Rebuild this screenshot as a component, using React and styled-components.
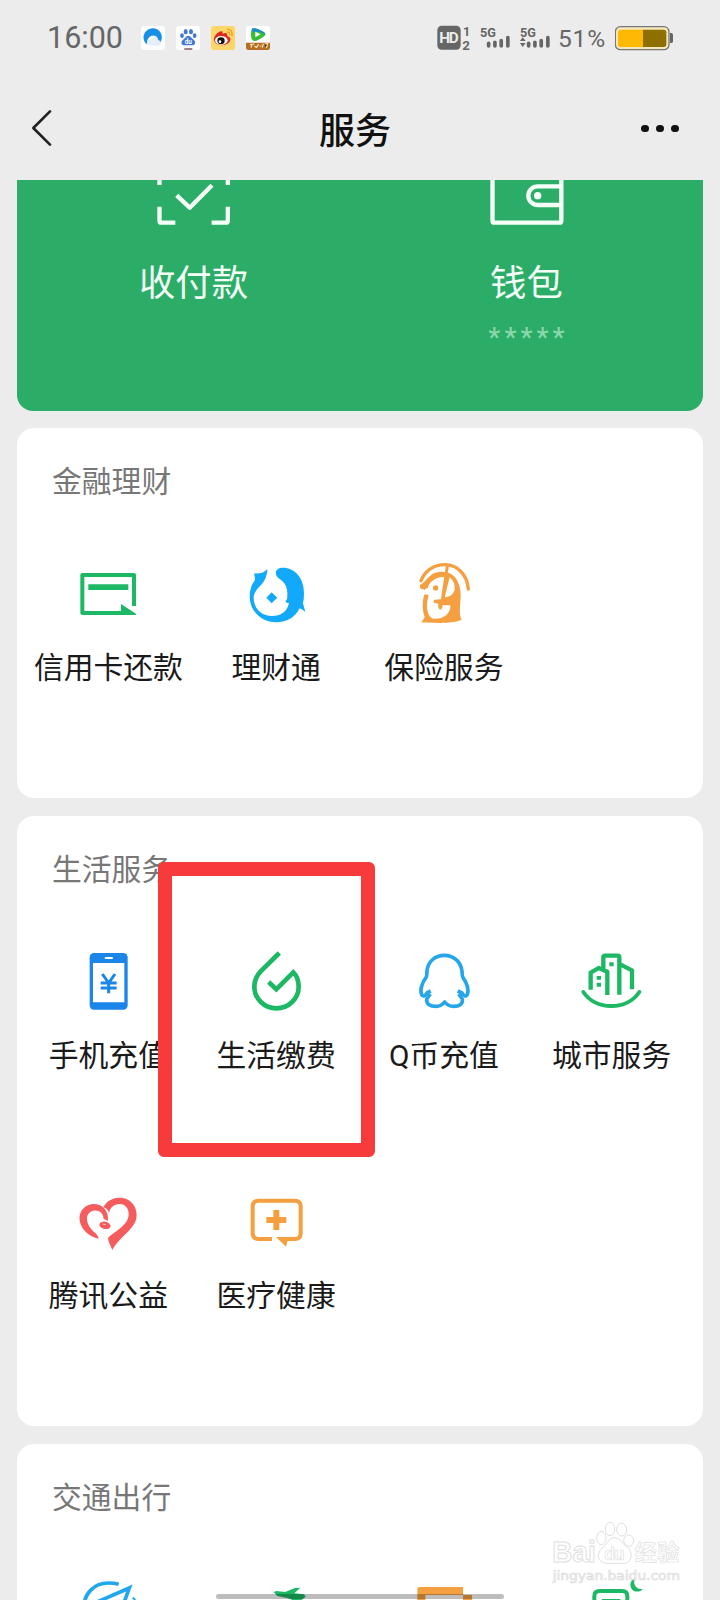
import React from 'react'
import styled, { createGlobalStyle } from 'styled-components'

const green = '#1db863'
const blue = '#12a9fb'
const orange = '#f5a040'

function App() {
    return (
        <Page>
            <GlobalStyle />
            <StatusBar />
            <NavBar>
                <svg width="22" height="40" viewBox="93 324 66 120">
                    <path d="M150 334L100 384L150 434" fill="none" stroke="#222" strokeWidth="8" strokeLinecap="round" strokeLinejoin="round" />
                </svg>
                <NavTitle>服务</NavTitle>
                <Dots><i /><i /><i /></Dots>
            </NavBar>
            <PayCard>
                <PayItem>
                    <svg width="74" height="46" viewBox="470 30 222 138">
                        <path d="M477.500 30V45M682.500 30V45M477.500 110V152Q477.500 158 483.500 158H525M682.500 110V152Q682.500 158 676.500 158H634M529 76L568 113L635 46" fill="none" stroke="#f4fff8" strokeWidth="13" strokeLinejoin="round" />
                    </svg>
                    <PayLabel>收付款</PayLabel>
                </PayItem>
                <PayItem>
                    <svg width="74" height="46" viewBox="389 30 222 138">
                        <path d="M396.500 20V152Q396.500 158 402.500 158H597Q603 158 603 152V20M603 49H532A28 28 0 0 0 532 105H603" fill="none" stroke="#f4fff8" strokeWidth="13" />
                        <circle cx="532" cy="77" r="11" fill="#f4fff8" />
                    </svg>
                    <PayLabel>钱包</PayLabel>
                    <Masked>*****</Masked>
                </PayItem>
            </PayCard>
            {sections.map(section => (
                <Card key={section.title}>
                    <CardTitle>{section.title}</CardTitle>
                    <Grid>
                        {section.items.map(item => (
                            <Item key={item.view}>
                                <svg width="64" height="64" viewBox={`${item.view} 192 192`}>{item.icon}</svg>
                                {item.name && <Label>{item.name}</Label>}
                            </Item>
                        ))}
                    </Grid>
                </Card>
            ))}
            <Highlight />
            <Watermark />
            <HomeBar />
        </Page>
    )
}

export default App;

function StatusBar() {
    return (
        <Status>
            <Clock>16:00</Clock>
            <AppIcons>
                <svg width="24" height="24" viewBox="0 0 72 72">
                    <rect width="72" height="72" rx="10" fill="#fbfdff" />
                    <path d="M17 55C4 42 5 25 16 15C29 3 49 5 58 19C65 30 63 43 58 49C53 46 51 41 49 35C45 27 34 26 26 32C17 39 19 49 17 55Z" fill="#168fe6" />
                    <path d="M22 58C12 51 22 38 32 41C38 28 50 32 52 42C65 47 60 59 51 59Z" fill="#e6eefb" />
                </svg>
                <svg width="24" height="24" viewBox="0 0 72 72">
                    <rect width="72" height="72" rx="10" fill="#fff" />
                    <g fill="#4379d2">
                        <ellipse cx="29" cy="17" rx="6" ry="8" />
                        <ellipse cx="45" cy="17" rx="6" ry="8" />
                        <ellipse cx="18" cy="29" rx="5.500" ry="7" />
                        <ellipse cx="56" cy="29" rx="5.500" ry="7" />
                        <path d="M37 29C44 29 46 36 53 41C61 48 57 58 49 58H25C16 58 13 48 21 41C28 36 30 29 37 29Z" />
                    </g>
                    <text x="37" y="54" textAnchor="middle" fontFamily="Roboto" fontWeight="700" fontSize="19" fill="#fff">du</text>
                    <path d="M25 69H49" stroke="#704047" strokeWidth="4" />
                </svg>
                <svg width="24" height="24" viewBox="0 0 72 72">
                    <rect width="72" height="72" rx="8" fill="#fbd66b" />
                    <path d="M9 43C7 32 20 17 31 16C37 16 34 24 36 23C47 17 50 26 49 31C58 33 60 39 57 45C50 61 15 63 9 43Z" fill="#d92a22" />
                    <ellipse cx="31" cy="43" rx="19" ry="13" fill="#fff" />
                    <ellipse cx="30" cy="44" rx="11" ry="10" fill="#15100e" />
                    <circle cx="27" cy="47" r="4" fill="#fff" />
                    <path d="M48 10Q66 9 63 31M48 18Q57 18 56 28" fill="none" stroke="#ee9b26" strokeWidth="4" />
                </svg>
                <svg width="24" height="24" viewBox="0 0 72 72">
                    <rect width="72" height="72" rx="6" fill="#fff" />
                    <path d="M18 8Q28 3 54 19Q62 24 54 31Q35 46 24 45Q15 43 15 25Q15 13 18 8Z" fill="#38bc32" />
                    <path d="M19 7Q28 4 53 18Q58 22 57 26Q42 14 20 17Q16 10 19 7Z" fill="#168bd4" />
                    <path d="M28 17L44 25L28 34Z" fill="#fff" />
                    <path d="M0 50H72V65Q72 72 65 72H7Q0 72 0 65Z" fill="#b66e24" />
                    <path d="M12 56L25 54M18 55L15 65M25 61L33 64M38 54L31 66M41 60H47M52 53L49 65M56 54L65 53L61 66" stroke="#ffe6b7" strokeWidth="3.500" />
                </svg>
            </AppIcons>
            <Spacer />
            <svg width="34" height="34" viewBox="230 61 102 102">
                <rect x="231" y="75" width="70" height="72" rx="13" fill="#666" />
                <text x="266" y="128" textAnchor="middle" textLength="58" fontFamily="Roboto" fontWeight="700" fontSize="46" fill="#ececec">HD</text>
                <text x="308" y="105" fontFamily="Roboto" fontWeight="700" fontSize="38" fill="#666">1</text>
                <text x="306" y="147" fontFamily="Roboto" fontWeight="700" fontSize="40" fill="#666">2</text>
            </svg>
            <Signal />
            <Signal arrows />
            <Percent>51%</Percent>
            <svg width="60" height="26" viewBox="765 72 180 78">
                <rect x="766" y="77" width="161" height="69" rx="15" fill="#f3e7bb" stroke="#777" strokeWidth="4" />
                <path d="M782 86H849V138H782Q774 138 774 130V94Q774 86 782 86Z" fill="#ffb900" />
                <path d="M849 86H911Q919 86 919 94V130Q919 138 911 138H849Z" fill="#8e7000" />
                <path d="M930 96H934Q939 96 939 102V121Q939 126 934 126H930Z" fill="#666" />
            </svg>
        </Status>
    )
}

function Signal({ arrows }) {
    return (
        <SignalIcon viewBox="357 73 92 78">
            <text x="357" y="109" textLength="48" lengthAdjust="spacingAndGlyphs" fontFamily="Roboto" fontWeight="700" fontSize="38" fill="#666">5G</text>
            <path d="M383 128V136M402 125V136M421 120V136M441 111V136" stroke="#666" strokeWidth="11" strokeLinecap="round" />
            {arrows && <path d="M365 110L374 121H357ZM365 139L374 127H357Z" fill="#666" />}
        </SignalIcon>
    )
}

function Watermark() {
    return (
        <Mark viewBox="570 300 402 195">
            <g fill="#fff" stroke="#dedede" strokeWidth="3" fontFamily='"Liberation Sans", "Noto Sans CJK SC", sans-serif' fontWeight="700">
                <text x="577" y="427" fontSize="86" textLength="130" lengthAdjust="spacingAndGlyphs">Bai</text>
                <ellipse cx="724" cy="354" rx="14" ry="20" />
                <ellipse cx="750" cy="327" rx="14" ry="20" />
                <ellipse cx="785" cy="329" rx="15" ry="19" />
                <ellipse cx="806" cy="362" rx="15" ry="17" />
                <path d="M763 353C780 353 786 370 798 379C821 393 818 429 791 430H741C710 428 708 397 730 381C742 371 748 353 763 353Z" />
                <text x="733" y="420" fontSize="53" textLength="61" strokeWidth="2">du</text>
                <text x="824" y="420" fontSize="66" textLength="134" strokeWidth="2">经验</text>
            </g>
            <text x="578" y="480" fontFamily='"DejaVu Sans", sans-serif' fontSize="36" textLength="382" lengthAdjust="spacingAndGlyphs" fill="#fff" stroke="#dcdcdc" strokeWidth="2">jingyan.baidu.com</text>
        </Mark>
    )
}

const sections = [
    {
        title: '金融理财',
        items: [
            {
                name: '信用卡还款',
                view: '227 396',
                icon: <>
                    <path d="M401 528V435H246V549H364" fill="none" stroke={green} strokeWidth="12" strokeLinejoin="round" />
                    <path d="M264 463H384V480H264ZM362 522L408 552L405 555H362Z" fill={green} />
                </>
            },
            {
                name: '理财通',
                view: '732 396',
                icon: <path d="M802 418C802 435 795 455 780 468C768 480 760 492 761 505C763 540 788 558 816 558C842 558 862 545 867 519C862 520 859 518 856 513C862 511 862 505 862 490C862 468 852 455 838 446C823 436 824 418 840 414C882 409 912 442 912 490Q912 507 909 520L916 546Q907 539 899 535C885 562 860 577 829 577C785 577 750 545 749 500Q749 470 765 450Q765 440 762 430C778 433 792 428 802 418ZM815 487L832 503L815 520L799 503Z" fill={blue} />
            },
            {
                name: '保险服务',
                view: '156 66',
                icon: <>
                    <path d="M180 135C192 130 198 118 210 108C222 97 242 93 257 97C285 100 302 130 302 165C301 201 296 226 305 238C300 245 270 249 240 249L183 247Q190 241 194 232C187 212 186 190 192 166L206 154L180 145Z" fill={orange} />
                    <path d="M204 143C205 128 228 108 255 111L246 178L222 180V188L235 191V203Q240 211 247 203V196L271 196C272 222 251 238 222 236C202 234 196 200 206 165L195 163V148Z" fill="#fff" />
                    <path d="M269 112Q286 127 284 148C281 163 270 171 254 172Z" fill="#fff" />
                    <circle cx="227" cy="144" r="8" fill={orange} />
                    <path d="M183 122C195 92 222 74 254 74C292 74 322 104 325 147" fill="none" stroke={orange} strokeWidth="10" strokeLinecap="round" />
                    <path d="M262 78L247 181M225 184H252M241 185V204" fill="none" stroke={orange} strokeWidth="9" strokeLinecap="round" />
                </>
            },
        ]
    },
    {
        title: '生活服务',
        items: [
            {
                name: '手机充值',
                view: '229 450',
                icon: <>
                    <rect x="270" y="459" width="114" height="170" rx="13" fill="#1b85ea" />
                    <path d="M280 489H374V607H280Z" fill="#fff" />
                    <path d="M318 474H337" stroke="#fff" strokeWidth="6" strokeLinecap="round" />
                    <path d="M308 522L327 549L346 522M327 549V580M303 549H351M303 564H351" fill="none" stroke="#1b85ea" strokeWidth="9" />
                </>
            },
            {
                name: '生活缴费',
                view: '732 450',
                icon: <path d="M838 459L782 514C766 531 763 545 763 560C763 596 793 625 829 625C866 625 896 596 896 560C896 543 891 528 880 517L829 568L806 546" fill="none" stroke={green} strokeWidth="14" />
            },
            {
                name: 'Q币充值',
                view: '156 90',
                icon: <g fill="none" stroke="#25a6e9" strokeWidth="11" strokeLinejoin="round">
                    <path d="M212 213L202 218Q193 233 185 224C179 211 186 188 198 173C202 167 200 159 201 152C205 124 225 106 253 106C281 106 302 125 306 153C307 160 305 167 309 173C321 189 328 211 321 225Q314 233 306 219L293 213" />
                    <path d="M211 222L200 237C199 254 211 259 228 259Q244 259 254 246Q264 259 281 259C297 259 309 253 307 237L296 222" />
                </g>
            },
            {
                name: '城市服务',
                view: '659 90',
                icon: <>
                    <path d="M669 216C686 242 717 258 753 258C789 258 820 242 837 216" fill="none" stroke={green} strokeWidth="12" strokeLinecap="round" />
                    <path d="M691 209V158L715 144L741 155V225M729 145V112Q729 107 734 107H772Q777 107 777 112V224M781 134L815 151V208" fill="none" stroke={green} strokeWidth="13" strokeLinejoin="round" />
                    <path d="M747 127H760V139H747ZM709 168H722V179H709ZM709 188H722V200H709Z" fill={green} />
                </>
            },
            {
                name: '腾讯公益',
                view: '229 60',
                icon: <g fill="#f55c5e">
                    <path d="M311 112C322 90 345 80 370 84C400 90 415 118 410 145C403 180 360 200 338 240C333 226 325 215 325 204C340 187 385 168 387 135C388 112 372 99 355 103C340 105 331 115 328 128C324 118 319 114 311 112Z" />
                    <path d="M325 152C328 118 304 100 279 102C250 106 237 128 240 152C245 180 270 200 297 206Q295 197 288 190C272 178 260 160 262 142C265 125 282 118 297 123Q311 130 312 147Z" />
                    <ellipse cx="316" cy="166" rx="17" ry="11" transform="rotate(12 316 166)" />
                    <path d="M309 162L318 164" stroke="#fff" strokeWidth="2" />
                </g>
            },
            {
                name: '医疗健康',
                view: '732 60',
                icon: <>
                    <path d="M816 207H776Q758 207 758 190V109Q758 92 776 92H884Q902 92 902 109V190Q902 207 884 207H855" fill="none" stroke={orange} strokeWidth="12" />
                    <path d="M828 201H866L858 230ZM820 120H838V141H859V159H838V180H820V159H799V141H820Z" fill={orange} />
                </>
            },
        ]
    },
    {
        title: '交通出行',
        items: [
            {
                view: '229 474',
                icon: <>
                    <path d="M253 560C253 520 285 489 325 489Q344 489 357 493M290 547L389 504L365 570" fill="none" stroke="#22a7ee" strokeWidth="11" />
                    <path d="M399 533L407 540" fill="none" stroke="#22a7ee" strokeWidth="6" />
                </>
            },
            { view: '732 474', icon: <path d="M821 516L829 513L855 516L885 504L901 503L883 520L912 523L917 530L904 540L880 541L862 534L832 528Z" fill={green} /> },
            {
                view: '156 474',
                icon: <path d="M172 550V508Q172 501 179 501H309V525H336V550H309V525H196V550Z" fill={orange} />
            },
            {
                view: '659 474',
                icon: <>
                    <path d="M702 560V529Q702 513 718 513H785Q801 513 801 529V560M725 543H780" fill="none" stroke={green} strokeWidth="12" />
                    <path d="M826 475C815 486 825 512 849 507C838 518 818 518 812 503C807 490 814 477 826 475Z" fill={green} />
                </>
            },
        ]
    },
]

const GlobalStyle = createGlobalStyle`
    body {
        margin: 0;
        background: #ececec;
        font-family: Roboto, "Noto Sans CJK SC", sans-serif;
    }
    svg {
        display: block;
        flex-shrink: 0;
    }
`

const Page = styled.div`
    position: relative;
    width: 720px;
    height: 1600px;
    overflow: hidden;
    background: #ececec;
`

const Status = styled.div`
    display: flex;
    align-items: center;
    box-sizing: border-box;
    height: 75px;
    padding: 0 45px 0 47px;
`

const Clock = styled.span`
    width: 94px;
    font-size: 30.5px;
    color: #666;
`

const AppIcons = styled.div`
    display: flex;
    gap: 11px;
`

const Spacer = styled.div`
    flex: 1;
`

const SignalIcon = styled.svg`
    width: 30.5px;
    height: 26px;
    margin-left: 9px;
`

const Percent = styled.span`
    width: 49px;
    margin: 3px 8px 0 8px;
    font-size: 24.5px;
    line-height: 28px;
    letter-spacing: 0.8px;
    color: #666;
`

const NavBar = styled.div`
    display: flex;
    align-items: center;
    justify-content: space-between;
    box-sizing: border-box;
    height: 105px;
    padding: 0 41px 0 31px;
`

const NavTitle = styled.h1`
    margin: 8px 0 0 16px;
    font-size: 36px;
    line-height: 48px;
    font-weight: 500;
    color: #111;
`

const Dots = styled.div`
    display: flex;
    gap: 7.5px;
    margin-top: 2px;

    i {
        width: 7.6px;
        height: 7.6px;
        border-radius: 50%;
        background: #111;
    }
`

const PayCard = styled.div`
    display: flex;
    box-sizing: border-box;
    width: 686px;
    height: 231px;
    margin: 0 17px 17px;
    padding: 0 10px;
    border-radius: 0 0 16px 16px;
    background: #2bad67;
`

const PayItem = styled.div`
    flex: 1;
    display: flex;
    flex-direction: column;
    align-items: center;
    color: #f4fff8;
`

const PayLabel = styled.div`
    margin-top: 34px;
    font-size: 36.4px;
    line-height: 48px;
`

const Masked = styled.div`
    margin-top: 15px;
    padding-left: 4px;
    font-size: 28px;
    line-height: 30px;
    letter-spacing: 4px;
    color: #8fd6ae;
`

const Card = styled.div`
    box-sizing: border-box;
    margin: 0 17px 18px;
    padding: 34px 7.5px 0;
    border-radius: 17px;
    background: #fff;
`

const CardTitle = styled.h2`
    margin: 0 0 60px 27.5px;
    font-size: 29.8px;
    line-height: 40px;
    font-weight: 400;
    color: #777;
`

const Grid = styled.div`
    display: grid;
    grid-template-columns: repeat(4, 1fr);
    grid-auto-rows: 236px;
    row-gap: 4px;
`

const Item = styled.div`
    display: flex;
    flex-direction: column;
    align-items: center;
`

const Label = styled.div`
    margin-top: 22px;
    font-size: 29.8px;
    line-height: 40px;
    white-space: nowrap;
    color: #1a1a1a;
`

/* red marker around the bill payment entry */
const Highlight = styled.div`
    position: absolute;
    left: 158px;
    top: 862px;
    box-sizing: border-box;
    width: 217px;
    height: 295px;
    border: 14px solid #f73b3b;
    border-radius: 6px;
`

const Mark = styled.svg`
    position: absolute;
    left: 550px;
    top: 1520px;
    width: 134px;
    height: 65px;
`

const HomeBar = styled.div`
    position: absolute;
    left: 216px;
    top: 1594px;
    width: 288px;
    height: 5px;
    border-radius: 3px;
    background: rgba(0, 0, 0, 0.26);
`
